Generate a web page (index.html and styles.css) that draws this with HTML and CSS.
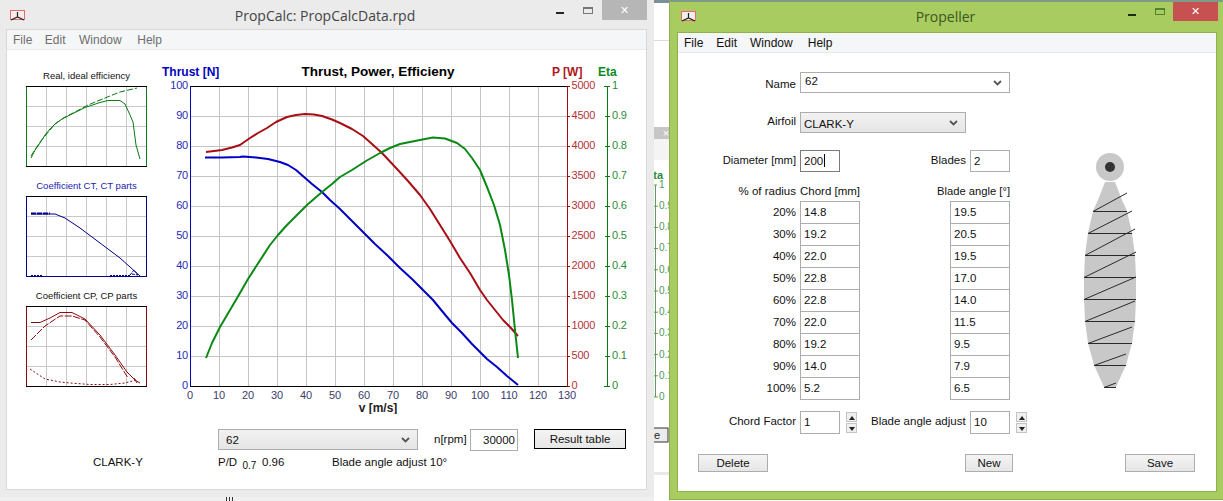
FILE: index.html
```html
<!DOCTYPE html>
<html lang="en">
<head>
<meta charset="utf-8">
<title>PropCalc</title>
<link rel="stylesheet" href="styles.css">
</head>
<body>
<div class="desktop">

  <svg class="back-window" viewBox="654 0 15 497" width="15" height="497">
    <rect x="654" y="0" width="15" height="497" fill="#fff"/>
    <rect x="654" y="0" width="15" height="3" fill="#7b8f98"/>
    <rect x="654" y="40" width="15" height="1" fill="#dcdcdc"/>
    <rect x="654" y="127" width="15" height="12" fill="#c6c6c6"/>
    <text x="666" y="137" class="bw-x" text-anchor="middle">×</text>
    <rect x="654" y="139" width="15" height="21" fill="#f4f4f4"/>
    <text x="663" y="179" class="bw-title" text-anchor="end">Eta</text>
    <path d="M655.500 185V397M653 185h4M654 206.200h4M654 227.400h4M654 248.600h4M654 269.800h4M654 291h4M654 312.200h4M654 333.400h4M654 354.600h4M654 375.800h4M654 397h4" stroke="#5e9a66" fill="none"/>
    <g class="bw-num">
      <text x="659" y="188">1</text><text x="659" y="209">0.9</text><text x="659" y="230">0.8</text><text x="659" y="251">0.7</text><text x="659" y="273">0.6</text><text x="659" y="294">0.5</text><text x="659" y="315">0.4</text><text x="659" y="336">0.3</text><text x="659" y="358">0.2</text><text x="659" y="379">0.1</text><text x="659" y="400">0</text>
    </g>
    <rect x="650" y="428" width="18" height="14" fill="#ececec" stroke="#333"/>
    <text x="654" y="439" class="bw-btn">e</text>
    <rect x="654" y="472" width="15" height="3" fill="#e8e8e8"/>
  </svg>

  <section class="window window-main">
    <header class="titlebar">
      <svg class="app-icon" viewBox="0 0 15 11" width="15" height="11">
        <rect x=".5" y=".5" width="14" height="9" fill="#f3eeee" stroke="#e8696b"/>
        <path d="M7.500 2V7M1 10L7.500 7L14 10" stroke="#222" stroke-width="1.200" fill="none"/>
      </svg>
      <h1 class="title">PropCalc: PropCalcData.rpd</h1>
      <div class="caption-buttons">
        <span class="cap-min"></span>
        <span class="cap-max"></span>
        <span class="cap-close">✕</span>
      </div>
    </header>
    <div class="client">
      <nav class="menu menu-inactive"><span>File</span><span>Edit</span><span>Window</span><span>Help</span></nav>
      <div class="plots">
        <aside class="thumbs">
          <figure class="thumb">
            <figcaption>Real, ideal efficiency</figcaption>
            <svg viewBox="26 86 121 81" width="121" height="81">
              <path class="thumb-grid" d="M46.500 86V166M66.500 86V166M86.500 86V166M106.500 86V166M126.500 86V166M27 106.500H146M27 126.500H146M27 146.500H146"/>
              <path d="M26.500 86V166.500M146.500 86V166.500" stroke="#0a7a14" fill="none"/>
              <path d="M26 86.500H147M26 166.500H147" stroke="#000" fill="none"/>
              <path d="M31 158L35 150L40 143L45 135L50 129L55 124L62 119L70 115L85 107.500L100 102.500L108 100.500L120 100.500L125 104L130 115L133 122L136 145L140 159" stroke="#0a7a14" fill="none"/>
              <path d="M31 156L40 142L55 124L65 117L75 112L88 105L100 100L120 92L137 88" stroke="#0a7a14" stroke-dasharray="6 2" fill="none"/>
            </svg>
          </figure>
          <figure class="thumb thumb-blue">
            <figcaption>Coefficient CT, CT parts</figcaption>
            <svg viewBox="26 196 121 81" width="121" height="81">
              <path class="thumb-grid" d="M46.500 196V276M66.500 196V276M86.500 196V276M106.500 196V276M126.500 196V276M27 216.500H146M27 236.500H146M27 256.500H146"/>
              <path d="M26.500 196V276.500M146.500 196V276.500" stroke="#00008c" fill="none"/>
              <path d="M26 196.500H147" stroke="#000" fill="none"/>
              <path d="M26 276.500H147" stroke="#00008c" fill="none"/>
              <path d="M31 214L55 214L65 218L80 228L100 243L120 258L130 267L140 276" stroke="#00008c" fill="none"/>
              <path d="M31 213.500H50" stroke="#00008c" stroke-width="2" stroke-dasharray="5 1" fill="none"/>
              <path d="M130 275L134 270L138 275L132 274" stroke="#00008c" stroke-dasharray="3 1" fill="none"/>
              <path d="M31 275.500H43M110 275.500H130" stroke="#00008c" stroke-dasharray="2 1" fill="none"/>
            </svg>
          </figure>
          <figure class="thumb">
            <figcaption>Coefficient CP, CP parts</figcaption>
            <svg viewBox="26 306 121 81" width="121" height="81">
              <path class="thumb-grid" d="M46.500 306V386M66.500 306V386M86.500 306V386M106.500 306V386M126.500 306V386M27 326.500H146M27 346.500H146M27 366.500H146"/>
              <path d="M26.500 306V386.500M146.500 306V386.500" stroke="#8c0a0f" fill="none"/>
              <path d="M26 306.500H147M26 386.500H147" stroke="#000" fill="none"/>
              <path d="M31 322.500L40 322.500L50 318L60 312.500L72 312.500L85 319L100 335L115 355L127 372L135 380L140 383" stroke="#8c0a0f" fill="none"/>
              <path d="M31 340L45 326L60 316L72 316L85 320L100 337L115 357L128 378" stroke="#8c0a0f" stroke-dasharray="7 1.500" fill="none"/>
              <path d="M134 378L137 383" stroke="#8c0a0f" fill="none"/>
              <path d="M30 369L45 379L60 382L70 383L90 384.500L110 384.500L125 383L136 380" stroke="#8c0a0f" stroke-dasharray="2 2" fill="none"/>
            </svg>
          </figure>
        </aside>
        <svg class="main-chart" viewBox="156 62 490 352" width="490" height="352">
          <path class="grid" d="M219.500 86V386M248.500 86V386M277.500 86V386M306.500 86V386M335.500 86V386M364.500 86V386M393.500 86V386M422.500 86V386M451.500 86V386M480.500 86V386M509.500 86V386M538.500 86V386M190 116.500H567M190 146.500H567M190 176.500H567M190 206.500H567M190 236.500H567M190 266.500H567M190 296.500H567M190 326.500H567M190 356.500H567"/>
          <path d="M190 86.500H567M190 386.500H567" stroke="#000" fill="none"/>
          <path d="M190.500 86V386" stroke="#0000b4" fill="none"/>
          <path d="M567.500 86V386M567 86.500h3M567 116.500h3M567 146.500h3M567 176.500h3M567 206.500h3M567 236.500h3M567 266.500h3M567 296.500h3M567 326.500h3M567 356.500h3M567 386.500h3" stroke="#a00a10" fill="none"/>
          <path d="M607.500 86V386M604 86.500h6M605 116.500h5M605 146.500h5M605 176.500h5M605 206.500h5M605 236.500h5M605 266.500h5M605 296.500h5M605 326.500h5M605 356.500h5M604 386.500h6" stroke="#0a7a14" fill="none"/>

          <path class="curve" stroke="#0000c4" d="M205 157.500L222 157.500L240 157L243 156.500L256 157.500L268 159L280 162L288 165L296 170L304 177L312 184L322 192L330 200L340 209L350 219L362 231L375 244L388 256L400 268L412 279L424 291L433 300L442 311L452 323L462 333L472 344L480 352L487 359L497 367L507 376L518 385"/>
          <path class="curve" stroke="#a80e14" d="M206 152L214 151L222 150L232 147.500L240 145L250 138L258 133L267 128L276 122L287 117L296 115L305 114L314 114.500L322 116L332 119.500L340 123L352 129L363 136L372 144L382 153L397 169L408 181L420 195L430 209L440 225L450 241L460 258L470 273L480 290L487 300L495 310L503 320L510 327L518 336"/>
          <path class="curve" stroke="#0a8a14" d="M206 358L212 343L220 327L230 310L240 293L248 279L257 265L270 245L278 235L287 225L297 215L307 205L322 192L332 184L340 177L352 170L366 161L380 153L390 148L400 144L415 141L425 139L433 137.500L445 138.500L457 143L465 149L472 158L480 170L487 187L494 205L500 225L505 250L509 275L512 300L515 330L518 358"/>

          <g class="tick tick-blue" text-anchor="end">
            <text x="188" y="89">100</text><text x="188" y="119">90</text><text x="188" y="149">80</text><text x="188" y="179">70</text><text x="188" y="209">60</text><text x="188" y="239">50</text><text x="188" y="269">40</text><text x="188" y="299">30</text><text x="188" y="329">20</text><text x="188" y="359">10</text><text x="188" y="389">0</text>
          </g>
          <g class="tick tick-black" text-anchor="middle">
            <text x="190" y="399">0</text><text x="219" y="399">10</text><text x="248" y="399">20</text><text x="277" y="399">30</text><text x="306" y="399">40</text><text x="335" y="399">50</text><text x="364" y="399">60</text><text x="393" y="399">70</text><text x="422" y="399">80</text><text x="451" y="399">90</text><text x="480" y="399">100</text><text x="509" y="399">110</text><text x="538" y="399">120</text><text x="567" y="399">130</text>
          </g>
          <g class="tick tick-red">
            <text x="571.500" y="89">5000</text><text x="571.500" y="119">4500</text><text x="571.500" y="149">4000</text><text x="571.500" y="179">3500</text><text x="571.500" y="209">3000</text><text x="571.500" y="239">2500</text><text x="571.500" y="269">2000</text><text x="571.500" y="299">1500</text><text x="571.500" y="329">1000</text><text x="571.500" y="359">500</text><text x="571.500" y="389">0</text>
          </g>
          <g class="tick tick-green">
            <text x="612" y="89">1</text><text x="612" y="119">0.9</text><text x="612" y="149">0.8</text><text x="612" y="179">0.7</text><text x="612" y="209">0.6</text><text x="612" y="239">0.5</text><text x="612" y="269">0.4</text><text x="612" y="299">0.3</text><text x="612" y="329">0.2</text><text x="612" y="359">0.1</text><text x="612" y="389">0</text>
          </g>
          <text class="chart-title" x="378" y="75.500" text-anchor="middle">Thrust, Power, Efficieny</text>
          <text class="axis-title axis-blue" x="162" y="76">Thrust [N]</text>
          <text class="axis-title axis-red" x="552" y="76">P [W]</text>
          <text class="axis-title axis-green" x="598" y="76">Eta</text>
          <text class="axis-title" x="378" y="412" text-anchor="middle">v [m/s]</text>
        </svg>
      </div>
      <div class="run-row">
        <div class="select select-grey run-select">62<svg class="chev" viewBox="0 0 9 6" width="9" height="6"><path d="M1 1L4.500 4.500L8 1" fill="none" stroke="#555" stroke-width="1.800"/></svg></div>
        <span class="rpm-label">n[rpm]</span>
        <div class="field rpm-field">30000</div>
        <div class="button result-button">Result table</div>
      </div>
      <div class="info-row">
        <span class="info-airfoil">CLARK-Y</span>
        <span class="info-pd">P/D <sub>0.7</sub></span>
        <span class="info-val">0.96</span>
        <span>Blade angle adjust 10°</span>
      </div>
    </div>
  </section>

  <section class="window window-prop">
    <header class="titlebar">
      <svg class="app-icon" viewBox="0 0 15 11" width="15" height="11">
        <rect x=".5" y=".5" width="14" height="9" fill="#f3eeee" stroke="#e8696b"/>
        <path d="M7.500 2V7M1 10L7.500 7L14 10" stroke="#222" stroke-width="1.200" fill="none"/>
      </svg>
      <h1 class="title">Propeller</h1>
      <div class="caption-buttons">
        <span class="cap-min"></span>
        <span class="cap-max"></span>
        <span class="cap-close">✕</span>
      </div>
    </header>
    <div class="client">
      <nav class="menu"><span>File</span><span>Edit</span><span>Window</span><span>Help</span></nav>
      <div class="prop-body">
        <div class="fields">
          <div class="row row-name">
            <label class="lab">Name</label>
            <div class="select name-select">62<svg class="chev" viewBox="0 0 9 6" width="9" height="6"><path d="M1 1L4.500 4.500L8 1" fill="none" stroke="#555" stroke-width="1.800"/></svg></div>
          </div>
          <div class="row row-airfoil">
            <label class="lab">Airfoil</label>
            <div class="select select-grey airfoil-select">CLARK-Y<svg class="chev" viewBox="0 0 9 6" width="9" height="6"><path d="M1 1L4.500 4.500L8 1" fill="none" stroke="#555" stroke-width="1.800"/></svg></div>
          </div>
          <div class="row row-diam">
            <label class="lab">Diameter [mm]</label>
            <div class="field f-short f-focus">200<i class="caret"></i></div>
            <label class="lab-blades">Blades</label>
            <div class="field f-short">2</div>
          </div>
          <div class="row row-head">
            <span class="lab">% of radius</span>
            <span class="head-chord">Chord [mm]</span>
            <span class="head-angle">Blade angle [°]</span>
          </div>
          <div class="data-row"><span class="lab">20%</span><div class="field f-chord">14.8</div><div class="field f-angle">19.5</div></div>
          <div class="data-row"><span class="lab">30%</span><div class="field f-chord">19.2</div><div class="field f-angle">20.5</div></div>
          <div class="data-row"><span class="lab">40%</span><div class="field f-chord">22.0</div><div class="field f-angle">19.5</div></div>
          <div class="data-row"><span class="lab">50%</span><div class="field f-chord">22.8</div><div class="field f-angle">17.0</div></div>
          <div class="data-row"><span class="lab">60%</span><div class="field f-chord">22.8</div><div class="field f-angle">14.0</div></div>
          <div class="data-row"><span class="lab">70%</span><div class="field f-chord">22.0</div><div class="field f-angle">11.5</div></div>
          <div class="data-row"><span class="lab">80%</span><div class="field f-chord">19.2</div><div class="field f-angle">9.5</div></div>
          <div class="data-row"><span class="lab">90%</span><div class="field f-chord">14.0</div><div class="field f-angle">7.9</div></div>
          <div class="data-row"><span class="lab">100%</span><div class="field f-chord">5.2</div><div class="field f-angle">6.5</div></div>
          <div class="row row-factor">
            <span class="lab">Chord Factor</span>
            <div class="field f-short f-tall">1</div>
            <div class="spinner"><span class="spin-up"></span><span class="spin-down"></span></div>
            <span class="lab-adjust">Blade angle adjust</span>
            <div class="field f-short f-tall">10</div>
            <div class="spinner"><span class="spin-up"></span><span class="spin-down"></span></div>
          </div>
        </div>
        <svg class="blade" viewBox="1080 150 60 245" width="60" height="245">
          <circle cx="1110" cy="167" r="14" fill="#c8c8c8"/>
          <circle cx="1110" cy="167" r="5" fill="#333"/>
          <polygon fill="#c8c8c8" points="1105,182 1115,182 1122,200 1127,211 1132,233 1135,255 1136,277 1136,299 1135,321 1132,343 1126,365 1116,387 1104,387 1094,365 1088,343 1085,321 1084,299 1084,277 1085,255 1088,233 1093,211 1098,200"/>
          <path fill="none" stroke="#2a2a2a" d="M1093 211.500H1127M1093 211.500L1127 193M1088 233.500H1132M1088 233.500L1132 211M1085 255.500H1135M1085 255.500L1135 229M1084 277.500H1136M1084 277.500L1136 252M1084 299.500H1136M1084 299.500L1136 277M1085 321.500H1135M1085 321.500L1135 301M1088 343.500H1132M1088 343.500L1132 327M1094 365.500H1126M1094 365.500L1126 354M1104 387.500H1116M1104 387.500L1116 383"/>
        </svg>
      </div>
      <div class="prop-buttons">
        <div class="button btn-delete">Delete</div>
        <div class="button btn-new">New</div>
        <div class="button btn-save">Save</div>
      </div>
    </div>
  </section>

  <div class="sliver"><i></i><i></i><i></i></div>
</div>
</body>
</html>
```

FILE: styles.css
```css
* { box-sizing: border-box; }
html, body { margin: 0; padding: 0; height: 100%; overflow: hidden; background: #fff; }
body { font: 11.500px "Liberation Sans", Arial, sans-serif; color: #111; }
.desktop { position: relative; width: 1223px; height: 501px; overflow: hidden; }

.back-window { position: absolute; left: 654px; top: 0; }
.bw-x { font: 11px "Liberation Sans", sans-serif; fill: #fff; }
.bw-title { font: bold 11px "Liberation Sans", sans-serif; fill: #2b8a36; }
.bw-num { font: 10px "Liberation Sans", sans-serif; fill: #4a9a55; }
.bw-btn { font: 11px "Liberation Sans", sans-serif; fill: #222; }

.window { position: absolute; top: 0; display: flex; flex-direction: column; }
.window-main { left: 0; width: 654px; height: 497px; background: #ebebeb; }
.window-prop { left: 669px; width: 554px; height: 500px; background: #a8cc60; border-top: 2px solid #7f9a86; border-bottom: 1px solid #8fb04f; border-left: 1px solid #8fb04f; }

.titlebar { display: grid; grid-template-columns: 1fr auto 1fr; align-items: start; flex: none; }
.window-main .titlebar { height: 29px; }
.window-prop .titlebar { height: 30px; }
.app-icon { margin: 10px 0 0 10px; display: block; }
.window-prop .app-icon { margin: 9px 0 0 11px; }
.title { margin: 6px 0 0; font: 400 14px/20px "Open Sans", sans-serif; color: #444; }
.window-main .title { transform: translateX(-2px); }
.window-prop .title { color: #3c5620; margin-top: 5px; transform: translateX(-1px); }

.caption-buttons { display: flex; justify-self: end; align-items: flex-start; padding-right: 7px; }
.window-prop .caption-buttons { padding-right: 5px; }
.cap-min { width: 8px; height: 2px; margin: 12px 19px 0 0; background: #222; }
.cap-max { width: 10px; height: 7px; margin: 7px 9px 0 0; border: 1px solid #777; border-top-width: 2px; }
.cap-close { width: 45px; height: 20px; background: #b6b6b6; color: #fff; font-size: 11px; line-height: 20px; text-align: center; }
.window-prop .cap-min { background: #1d2d10; margin-top: 12px; }
.window-prop .cap-max { border-color: #55802a; margin-top: 6px; margin-right: 8px; }
.window-prop .cap-close { background: #c75050; height: 19px; line-height: 19px; }

.client { flex: 1; display: flex; flex-direction: column; background: #fff; border: 1px solid #d9d9d9; }
.window-main .client { margin: 0 7px 7px 6px; }
.window-prop .client { margin: 0 6px 7px 7px; border-color: #8fb04f; }

.menu { display: flex; height: 20px; flex: none; padding-top: 3px; background: #f5f6f7; border-bottom: 1px solid #e9e9e9; font-size: 12px; line-height: 14px; color: #111; }
.menu span { margin-right: 13px; }
.menu span:nth-child(3) { margin-right: 15px; }
.window-main .menu { padding-left: 6px; color: #6e6e6e; }
.window-main .menu span { margin-right: 12.500px; }
.window-main .menu span:nth-child(2) { margin-right: 13.500px; }
.window-main .menu span:nth-child(3) { margin-right: 15.500px; }
.window-prop .menu { padding-left: 6px; }

/* main window */
.plots { display: flex; flex: none; height: 379px; }
.thumbs { width: 149px; padding: 20px 0 0 19px; flex: none; }
.thumb { margin: 0 0 13px; width: 121px; }
.thumb figcaption { height: 16px; font-size: 9.500px; line-height: 12px; text-align: center; white-space: nowrap; color: #111; }
.thumb-blue figcaption { color: #1c1cb0; }
.thumb svg { display: block; }
.thumb-grid { stroke: #c8c8c8; fill: none; }
.main-chart { display: block; margin-top: 12px; flex: none; }
.grid { stroke: #c4c4c4; fill: none; }
.curve { fill: none; stroke-width: 2; stroke-linejoin: round; }
.tick { font: 11px "Liberation Sans", sans-serif; letter-spacing: -.2px; }
.tick-blue { fill: #2a2ab4; }
.tick-black { fill: #3c3c6a; }
.tick-red { fill: #b43238; }
.tick-green { fill: #2a8c38; }
.chart-title { font: bold 13.500px "Liberation Sans", sans-serif; fill: #000; }
.axis-title { font: bold 12px "Liberation Sans", sans-serif; fill: #222; }
.axis-blue { fill: #0000c0; }
.axis-red { fill: #b01820; }
.axis-green { fill: #0a8a20; }

.run-row { display: flex; align-items: flex-start; height: 26px; flex: none; padding-left: 211px; }
.select { position: relative; display: flex; align-items: center; padding-left: 7px; border: 1px solid #adadad; background: #fff; line-height: 14px; }
.select-grey { background: linear-gradient(#f2f2f2, #e5e5e5); }
.chev { position: absolute; right: 7px; top: 7px; }
.run-select { width: 200px; height: 21px; }
.rpm-label { margin: 4px 0 0 16px; width: 36px; }
.field { border: 1px solid #adadad; background: #fff; padding-left: 3px; line-height: 20px; }
.rpm-field { width: 48px; height: 22px; padding: 0 2px 0 0; text-align: right; }
.button { display: flex; align-items: center; justify-content: center; border: 1px solid #adadad; background: linear-gradient(#f4f4f4, #e6e6e6); }
.result-button { width: 92px; height: 20px; margin-left: 16px; border-color: #000; }
.info-row { display: flex; padding-left: 86px; line-height: 14px; }
.info-airfoil { width: 125px; }
.info-pd { width: 44px; white-space: nowrap; }
.info-pd sub { font-size: 10px; margin-left: 2px; }
.info-val { width: 70px; }

/* propeller window */
.prop-body { display: flex; flex: none; padding-top: 19px; }
.fields { width: 353px; flex: none; }
.row { display: flex; align-items: flex-start; }
.lab { width: 118px; margin-right: 4px; flex: none; text-align: right; white-space: nowrap; line-height: 22px; }
.row-name .lab { line-height: 24px; }
.row-name { height: 21px; }
.name-select { width: 210px; height: 21px; padding-left: 4px; padding-bottom: 3px; }
.row-airfoil { height: 21px; margin-top: 19px; }
.row-airfoil .lab { line-height: 18px; }
.airfoil-select { width: 166px; height: 21px; padding-left: 3px; padding-top: 2px; }
.row-diam { height: 22px; margin-top: 17px; }
.row-diam .lab { line-height: 21px; font-size: 11.200px; }
.f-short { width: 40px; height: 22px; flex: none; }
.f-focus { border-color: #7b7b7b; position: relative; }
.caret { display: inline-block; width: 1px; height: 13px; margin-left: 1px; vertical-align: -2px; background: #000; }
.lab-blades { width: 126px; margin-right: 4px; text-align: right; line-height: 21px; }
.row-head { height: 17px; margin-top: 12px; line-height: 14px; }
.row-head .lab { line-height: 14px; }
.head-chord { width: 66px; white-space: nowrap; }
.head-angle { width: 144px; text-align: right; white-space: nowrap; font-size: 11.200px; }
.data-row { display: flex; height: 22px; }
.f-chord { width: 60px; height: 23px; flex: none; }
.f-angle { width: 60px; height: 23px; flex: none; margin-left: 90px; }
.row-factor { height: 23px; margin-top: 12px; }
.row-factor .lab { line-height: 21px; }
.f-tall { height: 23px; }
.spinner { display: flex; flex-direction: column; gap: 1px; width: 11px; margin: 1px 0 0 6px; flex: none; }
.spin-up, .spin-down { position: relative; display: block; height: 10px; border: 1px solid #c4c4c4; background: #efefef; }
.spin-up::after, .spin-down::after { content: ""; position: absolute; left: 2px; top: 2px; border: 3px solid transparent; }
.spin-up::after { top: 0; border-bottom: 4px solid #222; }
.spin-down::after { top: 3px; border-top: 4px solid #222; }
.lab-adjust { width: 96px; margin: 0 3px 0 14px; white-space: nowrap; line-height: 21px; flex: none; }
.blade { display: block; margin: 78px 0 0 49px; flex: none; }
.prop-buttons { display: flex; margin-top: 20px; padding-left: 20px; }
.prop-buttons .button { height: 18px; }
.btn-delete { width: 70px; }
.btn-new { width: 48px; margin-left: 197px; }
.btn-save { width: 70px; margin-left: 112px; }

.sliver { position: absolute; left: 0; top: 497px; width: 654px; height: 4px; background: #f0f0f0; display: flex; gap: 2px; padding-left: 226px; }
.sliver i { width: 1px; height: 4px; background: #333; }
```
